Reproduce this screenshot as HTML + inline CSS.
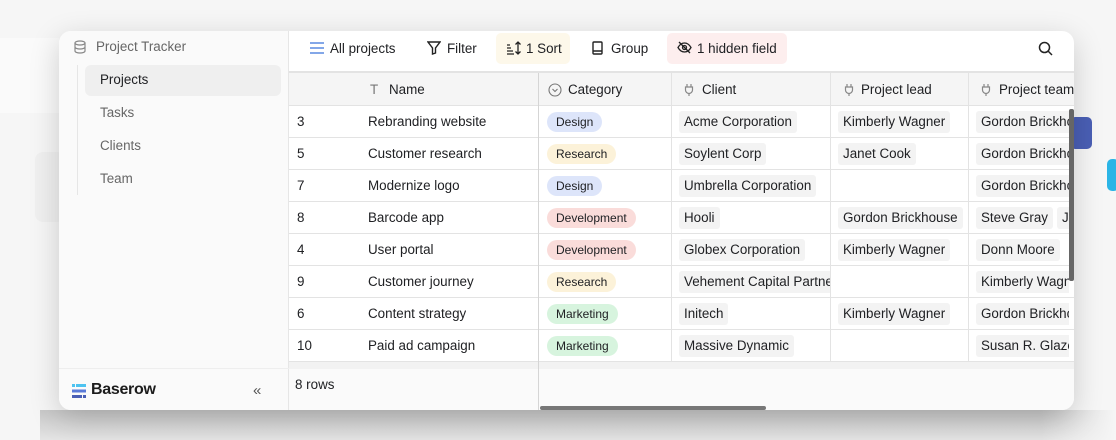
<!DOCTYPE html>
<html><head><meta charset="utf-8"><style>
*{box-sizing:border-box;margin:0;padding:0}
body{width:1116px;height:440px;overflow:hidden;background:#f6f6f6;font-family:"Liberation Sans",sans-serif;font-size:13.4px;color:#202124;position:relative}
.abs{position:absolute;white-space:nowrap}
.win{left:59px;top:31px;width:1015px;height:379px;background:#fff;border-radius:12px;overflow:hidden;box-shadow:0 8px 30px rgba(0,0,0,.18)}
.side{left:0;top:0;width:230px;height:379px;background:#fafafa;border-right:1px solid #e6e6e6}
.cell{position:absolute;height:32px;line-height:32px;white-space:nowrap;overflow:hidden}
.pill{display:inline-block;height:20px;line-height:20px;padding:0 9px;border-radius:10px;font-size:12px;vertical-align:middle;margin-top:-1px}
.tag{display:inline-block;height:22px;line-height:22px;padding:0 5px;border-radius:3px;background:#f3f3f3;vertical-align:middle;margin-right:4px;margin-top:-1px}
.hl{position:absolute;left:230px;right:0;height:1px;background:#e3e3e3}
.vl{position:absolute;width:1px;background:#e3e3e3}
.hd{position:absolute;top:43px;height:32px;line-height:32px;color:#202124;white-space:nowrap}
</style></head><body>
<div class="abs" style="left:0;top:38px;width:59px;height:75px;background:#fafafa"></div>
<div class="abs" style="left:35px;top:152px;width:30px;height:70px;background:#f0f0f0;border-radius:8px"></div>
<div class="abs" style="left:1070px;top:117px;width:22px;height:32px;background:#4a5fb5;border-radius:5px"></div>
<div class="abs" style="left:1107px;top:159px;width:12px;height:32px;background:#2bb5e6;border-radius:5px"></div>
<div class="abs" style="left:40px;top:410px;width:1076px;height:30px;background:linear-gradient(90deg,rgba(246,246,246,0),rgba(246,246,246,0) 93%,#f6f6f6),linear-gradient(#c8c8c8,#e4e4e4)"></div>
<div class="abs win">
 <div class="abs side">
  <svg class="abs" style="left:15px;top:9px" width="12" height="14" viewBox="0 0 12 14" fill="none" stroke="#888" stroke-width="1.2"><ellipse cx="6" cy="3" rx="5" ry="2"/><path d="M1 3v8c0 1.1 2.2 2 5 2s5-.9 5-2V3M1 7c0 1.1 2.2 2 5 2s5-.9 5-2"/></svg>
  <div class="abs" style="left:37px;top:8px;color:#666">Project Tracker</div>
  <div class="abs" style="left:18px;top:34px;width:1px;height:130px;background:#e6e6e6"></div>
  <div class="abs" style="left:26px;top:34px;width:196px;height:31px;background:#efefef;border-radius:6px"></div>
  <div class="abs" style="left:41px;top:41px">Projects</div>
  <div class="abs" style="left:41px;top:74px;color:#666">Tasks</div>
  <div class="abs" style="left:41px;top:107px;color:#666">Clients</div>
  <div class="abs" style="left:41px;top:140px;color:#666">Team</div>
  <div class="abs" style="left:0;top:337px;width:230px;height:1px;background:#eee"></div>
  <svg class="abs" style="left:13px;top:353px" width="14" height="14" viewBox="0 0 14 14"><rect x="0" y="0" width="3" height="3" fill="#4ec3f0"/><rect x="4" y="0" width="10" height="3" fill="#4ec3f0"/><rect x="0" y="5.5" width="14" height="3" fill="#5a7ad8"/><rect x="0" y="11" width="10" height="3" fill="#4a5fb5"/><rect x="11" y="11" width="3" height="3" fill="#4a5fb5"/></svg>
  <div class="abs" style="left:32px;top:350px;font-weight:bold;font-size:16px;color:#1c1c1c;letter-spacing:-.3px">Baserow</div>
  <div class="abs" style="left:194px;top:351px;color:#555;font-size:15px">«</div>
 </div>
 <svg class="abs" style="left:251px;top:11px" width="14" height="12" viewBox="0 0 14 12" stroke="#5a8ae0" stroke-width="1.4"><path d="M0 1h14M0 6h14M0 11h14"/></svg>
 <div class="abs" style="left:271px;top:10px">All projects</div>
 <svg class="abs" style="left:368px;top:10px" width="14" height="14" viewBox="0 0 14 14" fill="none" stroke="#222" stroke-width="1.4"><path d="M1 1h12L8.5 7v5L5.5 13V7z"/></svg>
 <div class="abs" style="left:388px;top:10px">Filter</div>
 <div class="abs" style="left:437px;top:2px;width:74px;height:31px;background:#fdf8ea;border-radius:5px"></div>
 <svg class="abs" style="left:447px;top:10px" width="16" height="14" viewBox="0 0 16 14" fill="none" stroke="#222" stroke-width="1.3"><path d="M1 4h3M1 7h4M1 10h6M1 13h7M12 1v12M9.5 3.5L12 1l2.5 2.5M9.5 10.5L12 13l2.5-2.5"/></svg>
 <div class="abs" style="left:467px;top:10px">1 Sort</div>
 <svg class="abs" style="left:533px;top:10px" width="11" height="14" viewBox="0 0 11 14" fill="none" stroke="#222" stroke-width="1.4"><rect x="1" y="1" width="9" height="12" rx="1"/><path d="M1 10h9"/></svg>
 <div class="abs" style="left:552px;top:10px">Group</div>
 <div class="abs" style="left:608px;top:2px;width:120px;height:31px;background:#fdeeee;border-radius:5px"></div>
 <svg class="abs" style="left:618px;top:10px" width="15" height="13" viewBox="0 0 15 13" fill="none" stroke="#222" stroke-width="1.3"><path d="M1 6.5C3 3 5 2 7.5 2S12 3 14 6.5C12 10 10 11 7.5 11S3 10 1 6.5z"/><circle cx="7.5" cy="6.5" r="2"/><path d="M2 1l11 11"/></svg>
 <div class="abs" style="left:638px;top:10px">1 hidden field</div>
 <svg class="abs" style="left:979px;top:10px" width="15" height="15" viewBox="0 0 15 15" fill="none" stroke="#222" stroke-width="1.5"><circle cx="6.5" cy="6.5" r="5"/><path d="M10 10l4 4"/></svg>
 <div class="abs" style="left:230px;top:40px;right:0;height:34px;background:#f5f5f5;border-top:2px solid #e3e3e3"></div>
 <div class="hl" style="top:74px"></div>
 <div class="hl" style="top:106px"></div><div class="hl" style="top:138px"></div><div class="hl" style="top:170px"></div><div class="hl" style="top:202px"></div><div class="hl" style="top:234px"></div><div class="hl" style="top:266px"></div><div class="hl" style="top:298px"></div><div class="hl" style="top:330px"></div>
 <div class="abs" style="left:230px;top:331px;right:0;height:48px;background:#fafafa;border-top:7px solid #f2f2f2"></div>
 <div class="vl" style="left:479px;top:42px;height:337px;background:#d5d5d5"></div>
 <div class="vl" style="left:612px;top:42px;height:289px"></div>
 <div class="vl" style="left:771px;top:42px;height:289px"></div>
 <div class="vl" style="left:909px;top:42px;height:289px"></div>
 <div class="hd" style="left:311px;color:#777">T</div><div class="hd" style="left:330px">Name</div>
 <svg class="abs" style="left:489px;top:52px" width="14" height="14" viewBox="0 0 14 14" fill="none" stroke="#777" stroke-width="1.1"><circle cx="7" cy="7" r="6"/><path d="M4.5 6l2.5 2.5L9.5 6"/></svg>
 <div class="hd" style="left:509px">Category</div>
 <svg class="abs" style="left:625px;top:52px" width="10" height="14" viewBox="0 0 10 14" fill="none" stroke="#888" stroke-width="1.2"><path d="M3 1v3M7 1v3M1.5 4h7v3a3.5 3.5 0 0 1-7 0zM5 10.5V13"/></svg><div class="hd" style="left:643px">Client</div>
 <svg class="abs" style="left:785px;top:52px" width="10" height="14" viewBox="0 0 10 14" fill="none" stroke="#888" stroke-width="1.2"><path d="M3 1v3M7 1v3M1.5 4h7v3a3.5 3.5 0 0 1-7 0zM5 10.5V13"/></svg><div class="hd" style="left:802px">Project lead</div>
 <svg class="abs" style="left:922px;top:52px" width="10" height="14" viewBox="0 0 10 14" fill="none" stroke="#888" stroke-width="1.2"><path d="M3 1v3M7 1v3M1.5 4h7v3a3.5 3.5 0 0 1-7 0zM5 10.5V13"/></svg><div class="hd" style="left:940px">Project team</div>
 <div class="cell" style="left:238px;top:75px">3</div><div class="cell" style="left:309px;top:75px">Rebranding website</div>
 <div class="cell" style="left:238px;top:107px">5</div><div class="cell" style="left:309px;top:107px">Customer research</div>
 <div class="cell" style="left:238px;top:139px">7</div><div class="cell" style="left:309px;top:139px">Modernize logo</div>
 <div class="cell" style="left:238px;top:171px">8</div><div class="cell" style="left:309px;top:171px">Barcode app</div>
 <div class="cell" style="left:238px;top:203px">4</div><div class="cell" style="left:309px;top:203px">User portal</div>
 <div class="cell" style="left:238px;top:235px">9</div><div class="cell" style="left:309px;top:235px">Customer journey</div>
 <div class="cell" style="left:238px;top:267px">6</div><div class="cell" style="left:309px;top:267px">Content strategy</div>
 <div class="cell" style="left:238px;top:299px">10</div><div class="cell" style="left:309px;top:299px">Paid ad campaign</div>
 <div class="cell" style="left:488px;top:75px"><span class="pill" style="background:#dde5fa">Design</span></div>
 <div class="cell" style="left:488px;top:107px"><span class="pill" style="background:#fcf2d9">Research</span></div>
 <div class="cell" style="left:488px;top:139px"><span class="pill" style="background:#dde5fa">Design</span></div>
 <div class="cell" style="left:488px;top:171px"><span class="pill" style="background:#fadcda">Development</span></div>
 <div class="cell" style="left:488px;top:203px"><span class="pill" style="background:#fadcda">Development</span></div>
 <div class="cell" style="left:488px;top:235px"><span class="pill" style="background:#fcf2d9">Research</span></div>
 <div class="cell" style="left:488px;top:267px"><span class="pill" style="background:#d7f4de">Marketing</span></div>
 <div class="cell" style="left:488px;top:299px"><span class="pill" style="background:#d7f4de">Marketing</span></div>
 <div class="cell" style="left:620px;top:75px;width:151px"><span class="tag">Acme Corporation</span></div>
 <div class="cell" style="left:620px;top:107px;width:151px"><span class="tag">Soylent Corp</span></div>
 <div class="cell" style="left:620px;top:139px;width:151px"><span class="tag">Umbrella Corporation</span></div>
 <div class="cell" style="left:620px;top:171px;width:151px"><span class="tag">Hooli</span></div>
 <div class="cell" style="left:620px;top:203px;width:151px"><span class="tag">Globex Corporation</span></div>
 <div class="cell" style="left:620px;top:235px;width:151px"><span class="tag">Vehement Capital Partners</span></div>
 <div class="cell" style="left:620px;top:267px;width:151px"><span class="tag">Initech</span></div>
 <div class="cell" style="left:620px;top:299px;width:151px"><span class="tag">Massive Dynamic</span></div>
 <div class="cell" style="left:779px;top:75px"><span class="tag">Kimberly Wagner</span></div>
 <div class="cell" style="left:779px;top:107px"><span class="tag">Janet Cook</span></div>
 <div class="cell" style="left:779px;top:171px"><span class="tag">Gordon Brickhouse</span></div>
 <div class="cell" style="left:779px;top:203px"><span class="tag">Kimberly Wagner</span></div>
 <div class="cell" style="left:779px;top:267px"><span class="tag">Kimberly Wagner</span></div>
 <div class="cell" style="left:917px;top:75px;width:93px"><span class="tag">Gordon Brickhouse</span></div>
 <div class="cell" style="left:917px;top:107px;width:93px"><span class="tag">Gordon Brickhouse</span></div>
 <div class="cell" style="left:917px;top:139px;width:93px"><span class="tag">Gordon Brickhouse</span></div>
 <div class="cell" style="left:917px;top:171px;width:93px"><span class="tag">Steve Gray</span><span class="tag">Janet</span></div>
 <div class="cell" style="left:917px;top:203px;width:93px"><span class="tag">Donn Moore</span></div>
 <div class="cell" style="left:917px;top:235px;width:93px"><span class="tag">Kimberly Wagner</span></div>
 <div class="cell" style="left:917px;top:267px;width:93px"><span class="tag">Gordon Brickhouse</span></div>
 <div class="cell" style="left:917px;top:299px;width:93px"><span class="tag">Susan R. Glaze</span></div>
 <div class="abs" style="left:1010px;top:78px;width:5px;height:172px;background:#666;border-radius:2px"></div>
 <div class="abs" style="left:236px;top:346px">8 rows</div>
 <div class="abs" style="left:481px;top:375px;width:226px;height:4px;background:#777;border-radius:2px"></div>
</div>
</body></html>
